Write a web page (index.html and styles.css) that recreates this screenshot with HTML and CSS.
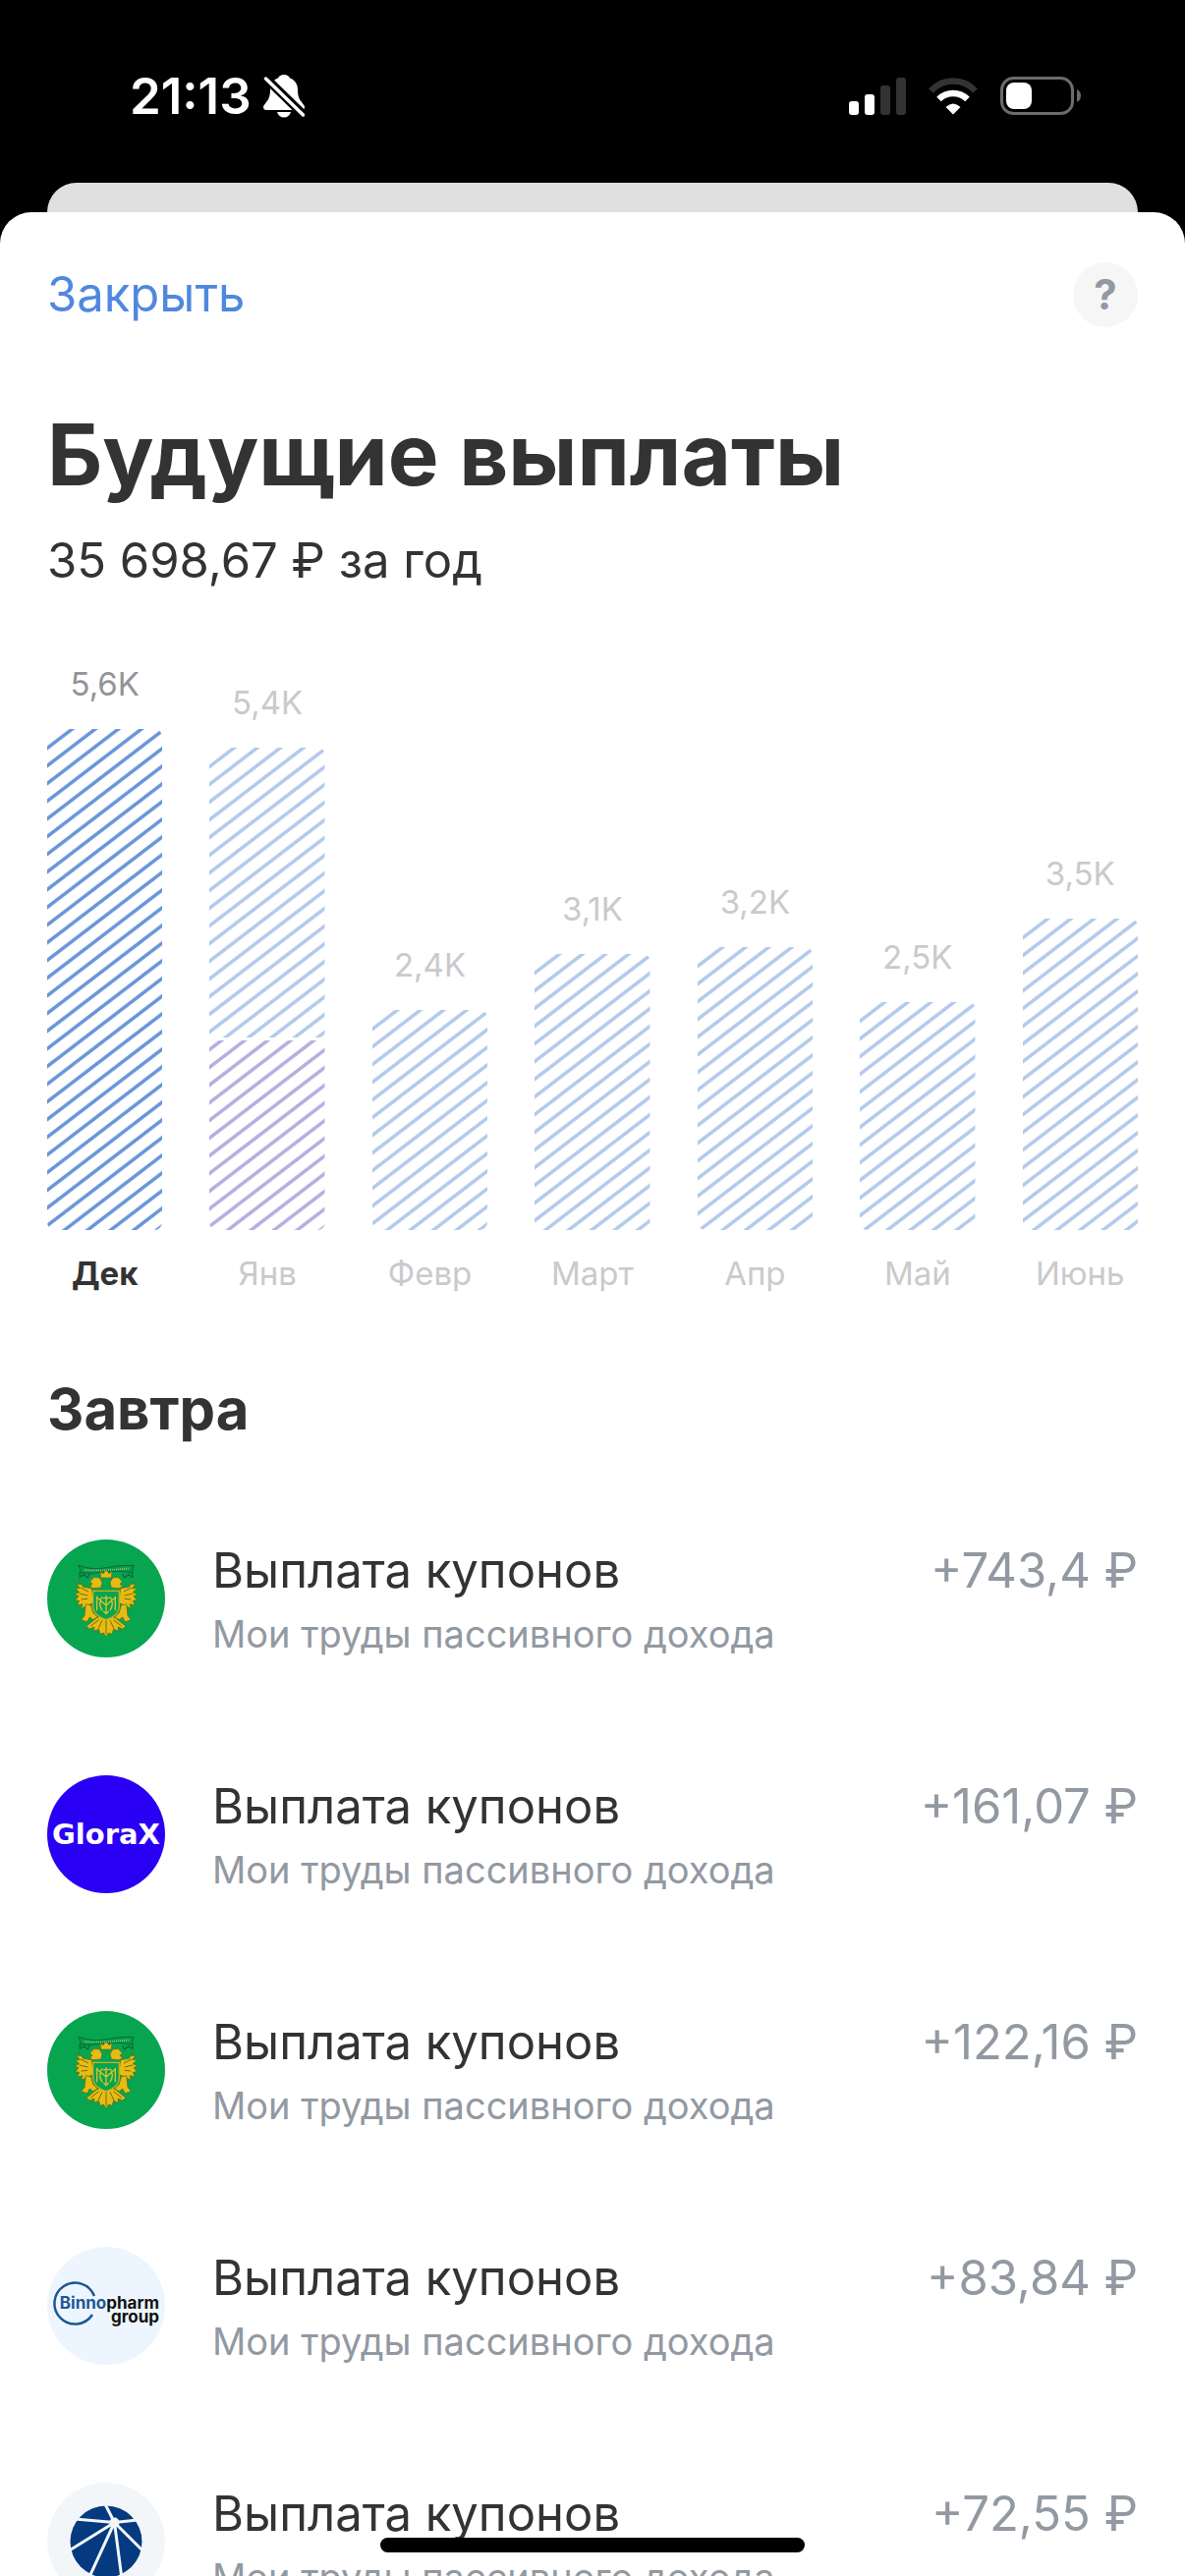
FILE: index.html
```html
<!DOCTYPE html>
<html lang="ru">
    <head>
        <meta charset="utf-8">
        <meta name="viewport" content="width=device-width">
        <title>Будущие выплаты</title>
        <link rel="stylesheet" href="styles.css">
    </head>
    <body>
        <!-- Shared stripe fills and the logo that is used more than once -->
        <svg class="defs" aria-hidden="true">
            <defs>
                <pattern id="stripes-blue" width="23.5" height="18" patternUnits="userSpaceOnUse" patternTransform="translate(2 0)">
                    <path d="M-23.5 18L23.5 -18M-23.5 36L47 -18M0 36L47 0" stroke="#6896da" stroke-width="3.5"/>
                </pattern>
                <pattern id="stripes-purple" width="23.5" height="18" patternUnits="userSpaceOnUse" patternTransform="translate(2 0)">
                    <path d="M-23.5 18L23.5 -18M-23.5 36L47 -18M0 36L47 0" stroke="#6c62c4" stroke-width="3.5"/>
                </pattern>
                <symbol id="crest" viewBox="54 51 360 360">
                    <rect x="54" y="51" width="360" height="360" fill="#07a550"/>
                    <path d="M150 130Q192 146 234 137Q276 128 318 130L312 152Q276 146 234 148Q190 158 158 152Z" fill="#0b9a4c" stroke="#086b36" stroke-width="3"/>
                    <path d="M154 150v16l12-8 12 10 6-12M314 150v16l-12-8-12 10-6-12" fill="none" stroke="#086b36" stroke-width="4"/>
                    <path d="M168 144Q234 148 302 139" fill="none" stroke="#8ccc88" stroke-width="5" stroke-dasharray="3 3"/>
                    <g fill="#e8bb14" stroke="#5a6a14" stroke-width="2">
                        <path d="M150 176l14 20 26 4 6 44-18 8-20 10 4-14-16 4 6-14-12-2 10-12-12-6 14-6-12-12 14 0-10-14 12 2z"/>
                        <path d="M318 176l-14 20-26 4-6 44 18 8 20 10-4-14 16 4-6-14 12-2-10-12 12-6-14-6 12-12-14 0 10-14-12 2z"/>
                        <path d="M196 200l-12-4 8-10-8-6 14-14 16 2 8 14-4 16zM272 200l12-4-8-10 8-6-14-14-16 2-8 14 4 16z"/>
                        <path d="M216 146l8 10 10-12 10 12 8-10-2 22h-32z"/>
                        <path d="M172 248l16 4 6 22 14 14-14 8-10-8-8 14-18-6 10-12zM296 248l-16 4-6 22-14 14 14 8 10-8 8 14 18-6-10-12z"/>
                        <path d="M206 290l14-6 14 8 14-8 14 6 32 26-10 8-14-6 2 12-16-4-4 14-10-4-8 12-8-12-10 4-4-14-16 4 2-12-14 6-10-8z"/>
                    </g>
                    <path d="M234 298v42M222 298l-14 30M246 298l14 30M212 296l-26 20M256 296l26 20" fill="none" stroke="#6b7010" stroke-width="3"/>
                    <path d="M156 198l24 12M152 216l26 6M158 234l20-2M312 198l-24 12M316 216l-26 6M310 234l-20-2" fill="none" stroke="#6b7010" stroke-width="3"/>
                    <path d="M194 208h80v50q-2 26-40 38q-38-12-40-38z" fill="#07a550" stroke="#d2ad1c" stroke-width="4"/>
                    <path d="M206 224v44M262 224v44M206 228l28 24 28-24M222 226q-14 18 0 42M246 226q14 18 0 42M234 222v56M224 230h20M226 270l8 8 8-8" fill="none" stroke="#d9c22d" stroke-width="4"/>
                    <path d="M222 176q12-6 24 0-2 14-12 18-10-4-12-18z" fill="#07a550"/>
                </symbol>
            </defs>
        </svg>

        <header class="status">
            <div class="status-left">
                <time>21:13</time>
                <svg class="bell" viewBox="0 0 42 44" fill="#fff" aria-label="Без звука">
                    <path d="M21 0c-3 0-5 1.500-6 3.500C9.500 5.500 7 10 7 15c0 7-1.500 10-4 13-2 2.500-3 3.500-3 5 0 1.800 1.200 3 3 3h36c1.800 0 3-1.200 3-3 0-1.500-1-2.500-3-5-2.500-3-4-6-4-13 0-5-2.500-9.500-8-11.500C26 1.500 24 0 21 0z"/>
                    <path d="M14 38h14c-1 3.500-3.500 5.500-7 5.500s-6-2-7-5.500z"/>
                    <path d="M2 3L41 41" stroke="#000" stroke-width="9"/>
                    <path d="M2.500 4L40.500 41" stroke="#fff" stroke-width="3.500" stroke-linecap="round"/>
                </svg>
            </div>
            <div class="status-right">
                <svg class="signal" viewBox="0 0 58 38" fill="#fff" aria-label="Сигнал">
                    <rect y="24" width="10" height="14" rx="3"/>
                    <rect x="16" y="17" width="10" height="21" rx="3"/>
                    <rect x="32" y="8" width="10" height="30" rx="3" opacity=".2"/>
                    <rect x="48" width="10" height="38" rx="3" opacity=".2"/>
                </svg>
                <svg class="wifi" viewBox="0 0 50 38" fill="none" stroke="#fff" aria-label="Wi-Fi">
                    <path d="M2.500 13.500Q11.500 3.500 25 3.500T47.500 13.500" stroke-width="6.500" opacity=".2"/>
                    <path d="M10.500 22Q16.500 16 25 16T39.500 22" stroke-width="6.500"/>
                    <path d="M17.500 30q7.500-7 15 0L25 37.500z" fill="#fff" stroke="none"/>
                </svg>
                <svg class="battery" viewBox="0 0 82 40" fill="none" aria-label="Батарея">
                    <rect x="1.500" y="1.500" width="72" height="36" rx="12" stroke="#6b6b6b" stroke-width="3"/>
                    <rect x="6" y="6" width="26" height="27" rx="8" fill="#fff"/>
                    <path d="M78 13q4 2 4 6.500t-4 6.500z" fill="#6b6b6b"/>
                </svg>
            </div>
        </header>

        <div class="behind"></div>

        <main class="sheet">
            <nav class="topbar">
                <button class="close" type="button">Закрыть</button>
                <button class="help" type="button" aria-label="Справка">?</button>
            </nav>

            <h1>Будущие выплаты</h1>
            <p class="total">35 698,67 ₽ за год</p>

            <section class="chart">
                <div class="month active">
                    <span class="value">5,6K</span>
                    <svg class="bar" style="height: 510px"><rect width="100%" height="100%" fill="url(#stripes-blue)"/></svg>
                    <span class="name">Дек</span>
                </div>
                <div class="month">
                    <span class="value">5,4K</span>
                    <svg class="bar" style="height: 491px">
                        <rect width="100%" height="295" fill="url(#stripes-blue)"/>
                        <rect y="298" width="100%" height="193" fill="url(#stripes-purple)"/>
                    </svg>
                    <span class="name">Янв</span>
                </div>
                <div class="month">
                    <span class="value">2,4K</span>
                    <svg class="bar" style="height: 224px"><rect width="100%" height="100%" fill="url(#stripes-blue)"/></svg>
                    <span class="name">Февр</span>
                </div>
                <div class="month">
                    <span class="value">3,1K</span>
                    <svg class="bar" style="height: 281px"><rect width="100%" height="100%" fill="url(#stripes-blue)"/></svg>
                    <span class="name">Март</span>
                </div>
                <div class="month">
                    <span class="value">3,2K</span>
                    <svg class="bar" style="height: 288px"><rect width="100%" height="100%" fill="url(#stripes-blue)"/></svg>
                    <span class="name">Апр</span>
                </div>
                <div class="month">
                    <span class="value">2,5K</span>
                    <svg class="bar" style="height: 232px"><rect width="100%" height="100%" fill="url(#stripes-blue)"/></svg>
                    <span class="name">Май</span>
                </div>
                <div class="month">
                    <span class="value">3,5K</span>
                    <svg class="bar" style="height: 317px"><rect width="100%" height="100%" fill="url(#stripes-blue)"/></svg>
                    <span class="name">Июнь</span>
                </div>
            </section>

            <h2>Завтра</h2>
            <ul class="payments">
                <li>
                    <svg class="logo"><use href="#crest"/></svg>
                    <div class="info">
                        <p class="title">Выплата купонов</p>
                        <p class="account">Мои труды пассивного дохода</p>
                    </div>
                    <span class="amount">+743,4 ₽</span>
                </li>
                <li>
                    <svg class="logo glorax" viewBox="0 0 120 120">
                        <rect width="120" height="120" fill="#2a00f5"/>
                        <text x="60" y="70" text-anchor="middle">GloraX</text>
                    </svg>
                    <div class="info">
                        <p class="title">Выплата купонов</p>
                        <p class="account">Мои труды пассивного дохода</p>
                    </div>
                    <span class="amount">+161,07 ₽</span>
                </li>
                <li>
                    <svg class="logo"><use href="#crest"/></svg>
                    <div class="info">
                        <p class="title">Выплата купонов</p>
                        <p class="account">Мои труды пассивного дохода</p>
                    </div>
                    <span class="amount">+122,16 ₽</span>
                </li>
                <li>
                    <svg class="logo binnopharm" viewBox="0 0 120 120">
                        <rect width="120" height="120" fill="#edf6fe"/>
                        <path d="M48 50A21 21 0 1 0 46 69" fill="none" stroke="#1d5796" stroke-width="2.500"/>
                        <text x="114" y="63" text-anchor="end"><tspan fill="#1d5796">Binno</tspan>pharm</text>
                        <text x="114" y="77" text-anchor="end">group</text>
                    </svg>
                    <div class="info">
                        <p class="title">Выплата купонов</p>
                        <p class="account">Мои труды пассивного дохода</p>
                    </div>
                    <span class="amount">+83,84 ₽</span>
                </li>
                <li>
                    <svg class="logo" viewBox="0 0 120 120">
                        <rect width="120" height="120" fill="#f3f6f9"/>
                        <circle cx="60" cy="60" r="36.500" fill="#053a80"/>
                        <path d="M68.500 40.500L58 20M68.500 40.500L92 38M68.500 40.500L28 37M68.500 40.500L21 70M68.500 40.500L42 98M68.500 40.500L76 98M68.500 40.500L100 72" stroke="#f3f6f9" stroke-width="3"/>
                        <circle cx="68.500" cy="40.500" r="5" fill="#f3f6f9"/>
                    </svg>
                    <div class="info">
                        <p class="title">Выплата купонов</p>
                        <p class="account">Мои труды пассивного дохода</p>
                    </div>
                    <span class="amount">+72,55 ₽</span>
                </li>
            </ul>
        </main>

        <div class="home-indicator"></div>
    </body>
</html>
```

FILE: styles.css
```css
* {
    box-sizing: border-box;
}

body {
    display: flex;
    flex-direction: column;
    height: 100vh;
    margin: 0;
    overflow: hidden;
    background: #000;
    color: #333;
    font-family: Inter, "Liberation Sans", sans-serif;
    font-size: 49px;
    line-height: 64px;
}

h1, h2, p, ul {
    margin: 0;
    padding: 0;
}

button {
    border: 0;
    padding: 0;
    background: none;
    font: inherit;
    cursor: pointer;
}

.defs {
    position: absolute;
    width: 0;
    height: 0;
}

/* Status bar */
.status {
    display: flex;
    flex: none;
    justify-content: space-between;
    padding: 66px 106px 56px 132px;
    color: #fff;
}

    .status-left, .status-right {
        display: flex;
        align-items: center;
    }

    .status-left {
        gap: 12px;
        font-size: 51px;
        font-weight: 600;
    }

    .status-right {
        gap: 23px;
    }

    .bell { width: 42px; height: 44px; }
    .signal { width: 58px; height: 38px; }
    .wifi { width: 50px; height: 38px; }
    .battery { width: 82px; height: 40px; }

/* Edge of the screen that lies under the sheet */
.behind {
    flex: none;
    height: 66px;
    margin: 0 48px -36px;
    border-radius: 30px 30px 0 0;
    background: #e0e0e0;
}

.sheet {
    flex: 1;
    min-height: 0;
    overflow: hidden;
    padding: 51px 48px 0;
    border-radius: 32px 32px 0 0;
    background: #fff;
}

.topbar {
    display: flex;
    align-items: center;
    justify-content: space-between;
}

    .close {
        color: #4f88df;
    }

    .help {
        width: 66px;
        height: 66px;
        border-radius: 50%;
        background: #f6f6f7;
        color: #9299a2;
        font-size: 42px;
        font-weight: 700;
    }

h1 {
    margin-top: 76px;
    font-size: 87px;
    font-weight: 700;
    line-height: 108px;
}

.total {
    margin-top: 22px;
}

/* Chart */
.chart {
    display: flex;
    align-items: flex-end;
    gap: 48px;
    margin-top: 73px;
}

    .month {
        display: flex;
        flex: 1;
        flex-direction: column;
        min-width: 0;
        color: #c9cacc;
        font-size: 33px;
        line-height: 40px;
        text-align: center;
    }

    .bar {
        width: 100%;
        margin: 26px 0 24px;
        border-radius: 8px;
        opacity: .5;
    }

    .active .value {
        color: #929497;
    }

    .active .bar {
        opacity: 1;
    }

    .active .name {
        color: #333;
        font-weight: 700;
    }

h2 {
    margin: 82px 0 97px;
    font-size: 58px;
    font-weight: 700;
    line-height: 72px;
}

/* Payments */
.payments {
    display: flex;
    flex-direction: column;
    gap: 112px;
    list-style: none;
}

    .payments li {
        display: flex;
        gap: 48px;
    }

    .info {
        flex: 1;
    }

    .account {
        color: #9299a2;
        font-size: 38px;
    }

    .amount {
        color: #9299a2;
    }

    .logo {
        flex: none;
        width: 120px;
        height: 120px;
        border-radius: 50%;
    }

    .glorax text {
        fill: #fff;
        font: 700 29px "DejaVu Sans", sans-serif;
    }

    .binnopharm text {
        fill: #111;
        font: 700 17px Inter, sans-serif;
    }

.home-indicator {
    position: fixed;
    bottom: 24px;
    left: 50%;
    width: 432px;
    height: 15px;
    margin-left: -216px;
    border-radius: 8px;
    background: #000;
}
```
